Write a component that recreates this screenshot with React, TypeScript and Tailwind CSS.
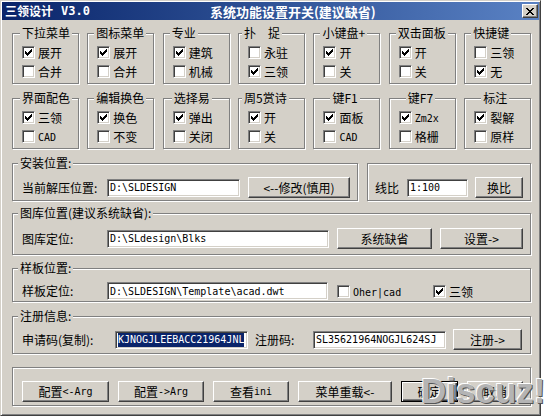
import React from "react";

type Opt = [string, boolean];

const groups: { t: string; ml: string; a: Opt; b: Opt }[] = [
  { t: "下拉菜单", ml: "ml-[7px]", a: ["展开", true], b: ["合并", false] },
  { t: "图标菜单", ml: "ml-[6px]", a: ["展开", true], b: ["合并", false] },
  { t: "专业", ml: "ml-[6px]", a: ["建筑", true], b: ["机械", false] },
  { t: "扑\u3000捉", ml: "ml-[3px]", a: ["永驻", false], b: ["三领", true] },
  { t: "小键盘+", ml: "ml-[6px]", a: ["开", true], b: ["关", false] },
  { t: "双击面板", ml: "ml-[6px]", a: ["开", true], b: ["关", false] },
  { t: "快捷键", ml: "ml-[6px]", a: ["三领", false], b: ["无", true] },
  { t: "界面配色", ml: "ml-[7px]", a: ["三领", true], b: ["CAD", false] },
  { t: "编辑换色", ml: "ml-[6px]", a: ["换色", true], b: ["不变", false] },
  { t: "选择易", ml: "ml-[8px]", a: ["弹出", true], b: ["关闭", false] },
  { t: "周5赏诗", ml: "ml-[3px]", a: ["开", true], b: ["关", false] },
  { t: "键F1", ml: "ml-[16px]", a: ["面板", true], b: ["CAD", false] },
  { t: "键F7", ml: "ml-[16px]", a: ["Zm2x", true], b: ["格栅", false] },
  { t: "标注", ml: "ml-[16px]", a: ["裂解", true], b: ["原样", false] },
];

const L = ({ children }: { children: React.ReactNode }) => (
  <span className="font-['DejaVu_Sans_Mono',monospace] text-[10px]">{children}</span>
);

// classic 7x7 check mark
const Tick = () => (
  <svg width="7" height="7" viewBox="0 0 7 7" shapeRendering="crispEdges">
    {[2, 3, 4, 3, 2, 1, 0].map((y, x) => (
      <rect key={x} x={x} y={y} width="1" height="3" fill="#000" />
    ))}
  </svg>
);

const CheckBox = ({ on }: { on: boolean }) => (
  <span className="w-[13px] h-[13px] shrink-0 bg-white border border-t-[#808080] border-l-[#808080] border-r-white border-b-white shadow-[inset_1px_1px_0_#404040,inset_-1px_-1px_0_#d4d0c8] flex items-center justify-center">
    {on && <Tick />}
  </span>
);

const Check = ({ on, children }: { on: boolean; children: React.ReactNode }) => (
  <div className="flex items-center h-[13px] gap-[3px]">
    <CheckBox on={on} />
    <span className="leading-[13px] whitespace-nowrap">{children}</span>
  </div>
);

const label = (s: string) => (/^[A-Za-z0-9]+$/.test(s) ? <L>{s}</L> : s);

const Field = ({ w, children }: { w: string; children: React.ReactNode }) => (
  <div
    className={`${w} h-[18px] shrink-0 bg-white border border-t-[#808080] border-l-[#808080] border-r-white border-b-white shadow-[inset_1px_1px_0_#404040,inset_-1px_-1px_0_#d4d0c8] flex items-center pl-[2px] overflow-hidden whitespace-nowrap font-['DejaVu_Sans_Mono',monospace] text-[10px]`}
  >
    {children}
  </div>
);

const Btn = ({ w, children, def }: { w: string; children: React.ReactNode; def?: boolean }) => (
  <div
    className={`${w} h-[21px] shrink-0 flex items-center justify-center bg-[#d4d0c8] border leading-none whitespace-nowrap ${
      def
        ? "border-black shadow-[inset_1px_1px_0_#fff,inset_-1px_-1px_0_#404040,inset_-2px_-2px_0_#808080]"
        : "border-t-white border-l-white border-r-[#404040] border-b-[#404040] shadow-[inset_-1px_-1px_0_#808080]"
    }`}
  >
    {children}
  </div>
);

const Section = ({ title, cls, children }: { title: string; cls: string; children: React.ReactNode }) => (
  <fieldset className={`${cls} min-w-0 border border-[#808080] shadow-[inset_1px_1px_0_#fff,1px_1px_0_#fff]`}>
    <legend className="ml-[5px] px-[2px] leading-[14px] bg-[#d4d0c8]">{title}</legend>
    {children}
  </fieldset>
);

export default function App() {
  return (
    <div className="w-[545px] h-[417px] bg-white font-['Noto_Sans_CJK_SC',sans-serif] text-[12px] text-black">
      <div className="relative w-[541px] h-[416px] bg-[#d4d0c8] border border-t-[#d4d0c8] border-l-[#d4d0c8] border-r-[#404040] border-b-[#404040] shadow-[inset_1px_1px_0_#fff,inset_-1px_-1px_0_#808080] p-[1px] flex flex-col">
        {/* title bar */}
        <div className="h-[18px] shrink-0 flex items-center bg-linear-to-r from-[#0a246a] to-[#5a82c4] text-white font-bold pl-[3px] pr-[1px]">
          <span className="text-[12px] leading-none">三领设计</span>
          <span className="ml-[8px] font-['DejaVu_Sans_Mono',monospace] text-[12px] leading-none">V3.0</span>
          <span className="ml-[120px] text-[13px] leading-none">系统功能设置开关(建议缺省)</span>
          <div className="ml-auto w-[16px] h-[14px] bg-[#d4d0c8] border border-t-white border-l-white border-r-[#404040] border-b-[#404040] shadow-[inset_-1px_-1px_0_#808080] flex items-center justify-center">
            <svg width="8" height="7" viewBox="0 0 8 7" shapeRendering="crispEdges" fill="#000">
              <rect x="0" y="0" width="2" height="1" />
              <rect x="6" y="0" width="2" height="1" />
              <rect x="1" y="1" width="2" height="1" />
              <rect x="5" y="1" width="2" height="1" />
              <rect x="2" y="2" width="4" height="1" />
              <rect x="3" y="3" width="2" height="1" />
              <rect x="2" y="4" width="4" height="1" />
              <rect x="1" y="5" width="2" height="1" />
              <rect x="5" y="5" width="2" height="1" />
              <rect x="0" y="6" width="2" height="1" />
              <rect x="6" y="6" width="2" height="1" />
            </svg>
          </div>
        </div>

        <div className="pl-[10px] pt-[6px] flex flex-col">
          {/* option groups */}
          <div className="w-[519px] grid grid-cols-7 gap-x-[8.5px] gap-y-[7px]">
            {groups.map((g) => (
              <fieldset
                key={g.t}
                className="h-[58px] min-w-0 border border-[#808080] shadow-[inset_1px_1px_0_#fff,1px_1px_0_#fff]"
              >
                <legend className={`${g.ml} px-[2px] leading-[14px] bg-[#d4d0c8] whitespace-nowrap`}>{g.t}</legend>
                <div className="pl-[9px] pt-[6px] flex flex-col gap-[6px]">
                  <Check on={g.a[1]}>{label(g.a[0])}</Check>
                  <Check on={g.b[1]}>{label(g.b[0])}</Check>
                </div>
              </fieldset>
            ))}
          </div>

          {/* install + line scale */}
          <div className="mt-[7px] flex items-start gap-[9px]">
            <Section title="安装位置:" cls="w-[346px] h-[45px]">
              <div className="pl-[9px] pt-[7px] flex items-center">
                <span className="w-[85px] shrink-0">当前解压位置:</span>
                <Field w="w-[133px]">{"D:\\SLDESIGN"}</Field>
                <div className="ml-[8px]">
                  <Btn w="w-[102px]">{"<--修改(慎用)"}</Btn>
                </div>
              </div>
            </Section>
            <div className="mt-[7px] w-[164px] h-[38px] border border-[#808080] shadow-[inset_1px_1px_0_#fff,1px_1px_0_#fff] pl-[7px] pt-[13px] flex items-start">
              <div className="flex items-center h-[21px]">
                <span className="w-[32px] shrink-0">线比</span>
                <Field w="w-[61px]">1:100</Field>
                <div className="ml-[7px]">
                  <Btn w="w-[48px]">换比</Btn>
                </div>
              </div>
            </div>
          </div>

          {/* library */}
          <div className="mt-[5px]">
            <Section title="图库位置(建议系统缺省):" cls="w-[519px] h-[49px]">
              <div className="pl-[9px] pt-[8px] flex items-center">
                <span className="w-[85px] shrink-0">图库定位:</span>
                <Field w="w-[222px]">{"D:\\SLdesign\\Blks"}</Field>
                <div className="ml-[8px]">
                  <Btn w="w-[95px]">系统缺省</Btn>
                </div>
                <div className="ml-[8px]">
                  <Btn w="w-[83px]">{"设置->"}</Btn>
                </div>
              </div>
            </Section>
          </div>

          {/* template */}
          <div className="mt-[6px]">
            <Section title="样板位置:" cls="w-[519px] h-[41px]">
              <div className="pl-[9px] pt-[7px] flex items-center">
                <span className="w-[85px] shrink-0">样板定位:</span>
                <Field w="w-[221px]">{"D:\\SLDESIGN\\Template\\acad.dwt"}</Field>
                <div className="ml-[9px] w-[96px]">
                  <Check on={false}>
                    <L>Oher|cad</L>
                  </Check>
                </div>
                <Check on={true}>三领</Check>
              </div>
            </Section>
          </div>

          {/* registration */}
          <div className="mt-[7px]">
            <Section title="注册信息:" cls="w-[519px] h-[45px]">
              <div className="pl-[9px] pt-[6px] flex items-center">
                <span className="w-[93px] shrink-0">申请码(复制):</span>
                <Field w="w-[133px]">
                  <span className="bg-[#0a246a] text-white leading-[14px]">KJNOGJLEEBACC21964JNL</span>
                </Field>
                <span className="ml-[7px] w-[58px] shrink-0">注册码:</span>
                <Field w="w-[133px]">SL35621964NOGJL624SJ</Field>
                <div className="ml-[7px]">
                  <Btn w="w-[69px]">{"注册->"}</Btn>
                </div>
              </div>
            </Section>
          </div>

          {/* bottom buttons */}
          <div className="mt-[13px] w-[519px] h-[39px] border border-[#808080] shadow-[inset_1px_1px_0_#fff,1px_1px_0_#fff] pl-[9px] pt-[13px] flex items-start gap-[9px]">
            <Btn w="w-[87px]">
              配置<L>{"<-Arg"}</L>
            </Btn>
            <Btn w="w-[86px]">
              配置<L>{"->Arg"}</L>
            </Btn>
            <Btn w="w-[76px]">
              查看<L>ini</L>
            </Btn>
            <Btn w="w-[94px]">{"菜单重载<-"}</Btn>
            <Btn w="w-[57px]" def>
              确定
            </Btn>
            <Btn w="w-[56px]">取消</Btn>
          </div>
        </div>

        {/* forum watermark */}
        <span className="absolute left-[420px] top-[372px] font-['Liberation_Sans',sans-serif] font-bold text-[35px] leading-none text-[#b4b4b4] [text-shadow:1px_1px_0_#555,-1px_-1px_0_#fff]">
          Discuz!
        </span>
      </div>
    </div>
  );
}
